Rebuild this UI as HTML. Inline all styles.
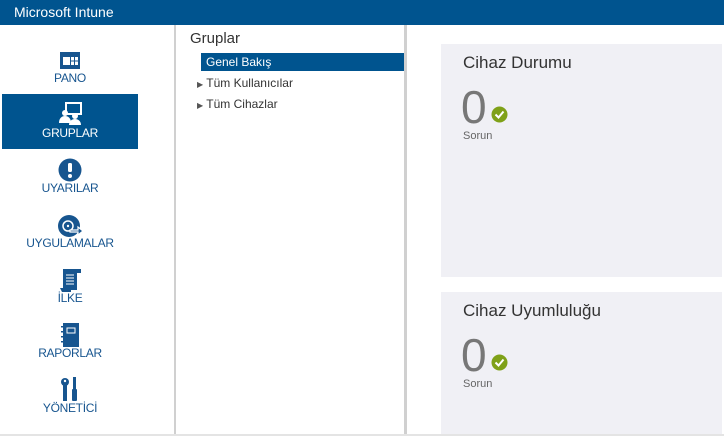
<!DOCTYPE html>
<html><head><meta charset="utf-8"><style>
*{margin:0;padding:0;box-sizing:border-box}
body{width:724px;height:436px;overflow:hidden;background:#fff;font-family:"Liberation Sans",sans-serif;position:relative}
.hdr{position:absolute;left:0;top:0;width:724px;height:25px;background:#00548f;color:#fff;font-size:14px;line-height:25px;padding-left:14px}
.vl{position:absolute;background:#d0d0d0}
.nav{position:absolute;left:2px;width:136px;height:55px;text-align:center;color:#17558f;font-size:12px}
.nav svg{position:absolute;left:54px;top:6px}
.nav span{position:absolute;left:0;right:0;top:32px;letter-spacing:-0.3px}
.sel{background:#00548f;color:#fff}
.card{position:absolute;left:441px;width:281px;background:#f0f0f5}
.ct{position:absolute;left:22px;font-size:17px;color:#333}
.zero{position:absolute;left:20px;font-size:46px;color:#777;line-height:1}
.chk{position:absolute;left:50px}
.sor{position:absolute;left:22px;font-size:11px;color:#666}
</style></head><body>
<div class="hdr">Microsoft Intune</div>
<div class="vl" style="left:174px;top:25px;width:2px;height:411px"></div>
<div class="vl" style="left:404px;top:25px;width:3px;height:411px"></div>
<div class="vl" style="left:0;top:434px;width:724px;height:2px;background:#e4e4e4"></div>

<div class="nav" style="top:39px"><svg width="28" height="28" viewBox="0 0 28 28"><rect x="4" y="7" width="20" height="17" fill="#17558f"/><rect x="7" y="12" width="7" height="8" fill="#fff"/><rect x="15" y="12" width="3" height="3.5" fill="#fff"/><rect x="19" y="12" width="3" height="3.5" fill="#fff"/><rect x="15" y="16.5" width="3" height="3.5" fill="#fff"/><rect x="19" y="16.5" width="3" height="3.5" fill="#fff"/></svg><span>PANO</span></div>
<div class="nav sel" style="top:94px"><svg width="28" height="28" viewBox="0 0 28 28"><rect x="10" y="3" width="15" height="11" fill="none" stroke="#fff" stroke-width="2"/><circle cx="9" cy="13" r="3" fill="#fff"/><path d="M3 23c0-5 3-7 6-7s6 2 6 7z" fill="#fff"/><circle cx="19" cy="16" r="3" fill="#fff"/><path d="M13 25c0-4 3-6 6-6s6 2 6 6z" fill="#fff"/></svg><span>GRUPLAR</span></div>
<div class="nav" style="top:149px"><svg width="28" height="28" viewBox="0 0 28 28"><circle cx="14" cy="15" r="11.5" fill="#17558f"/><rect x="12" y="8" width="4" height="9" rx="1.5" fill="#fff"/><circle cx="14" cy="21" r="2" fill="#fff"/></svg><span>UYARILAR</span></div>
<div class="nav" style="top:204px"><svg width="30" height="28" viewBox="0 0 30 28"><circle cx="13" cy="16" r="11" fill="#17558f"/><circle cx="12" cy="16" r="5" fill="none" stroke="#fff" stroke-width="1.5"/><circle cx="12" cy="16" r="1.2" fill="#fff"/><path d="M14 20h8v-3l5 4-5 4v-3h-8z" fill="#17558f" stroke="#fff" stroke-width="1.2"/></svg><span>UYGULAMALAR</span></div>
<div class="nav" style="top:259px"><svg width="28" height="30" viewBox="0 0 28 30"><rect x="7" y="4" width="14" height="21" fill="#17558f"/><path d="M19 4h6v4h-4" fill="#17558f"/><path d="M4 23h11v4H6z" fill="#17558f"/><g stroke="#fff" stroke-width="1"><line x1="10" y1="10" x2="18" y2="10"/><line x1="10" y1="13" x2="18" y2="13"/><line x1="10" y1="16" x2="18" y2="16"/><line x1="10" y1="19" x2="18" y2="19"/></g></svg><span>İLKE</span></div>
<div class="nav" style="top:314px"><svg width="28" height="28" viewBox="0 0 28 28"><rect x="7" y="3" width="16" height="24" fill="#17558f"/><rect x="11" y="8" width="8" height="5" fill="none" stroke="#fff" stroke-width="1"/><g fill="#17558f"><rect x="5" y="6" width="3" height="1.5"/><rect x="5" y="11" width="3" height="1.5"/><rect x="5" y="16" width="3" height="1.5"/><rect x="5" y="21" width="3" height="1.5"/></g></svg><span>RAPORLAR</span></div>
<div class="nav" style="top:369px"><svg width="28" height="28" viewBox="0 0 28 28"><circle cx="9" cy="7" r="4" fill="#17558f"/><rect x="7" y="9" width="4" height="17" fill="#17558f"/><circle cx="9" cy="6" r="1.2" fill="#fff"/><rect x="17" y="2" width="3" height="12" fill="#17558f"/><rect x="16" y="14" width="5" height="12" rx="1" fill="#17558f"/></svg><span>YÖNETİCİ</span></div>

<div style="position:absolute;left:190px;top:30px;font-size:15px;color:#333">Gruplar</div>
<div style="position:absolute;left:201px;top:53px;width:203px;height:18px;background:#00548f;color:#fff;font-size:12px;line-height:18px;padding-left:5px">Genel Bakış</div>
<div style="position:absolute;left:197px;top:76px;font-size:12px;color:#333"><span style="font-size:8px;color:#555">▶</span> Tüm Kullanıcılar</div>
<div style="position:absolute;left:197px;top:97px;font-size:12px;color:#333"><span style="font-size:8px;color:#555">▶</span> Tüm Cihazlar</div>

<div class="card" style="top:44px;height:233px">
<div class="ct" style="top:9px">Cihaz Durumu</div>
<div class="zero" style="top:40px">0</div>
<svg class="chk" style="top:62px" width="17" height="17" viewBox="0 0 17 17"><circle cx="8.5" cy="8.5" r="8" fill="#7fa118"/><path d="M4.5 8.5l3 3 5-6" fill="none" stroke="#fff" stroke-width="2"/></svg>
<div class="sor" style="top:86px">Sorun</div>
</div>
<div class="card" style="top:292px;height:142px">
<div class="ct" style="top:9px">Cihaz Uyumluluğu</div>
<div class="zero" style="top:40px">0</div>
<svg class="chk" style="top:62px" width="17" height="17" viewBox="0 0 17 17"><circle cx="8.5" cy="8.5" r="8" fill="#7fa118"/><path d="M4.5 8.5l3 3 5-6" fill="none" stroke="#fff" stroke-width="2"/></svg>
<div class="sor" style="top:86px">Sorun</div>
</div>
</body></html>
